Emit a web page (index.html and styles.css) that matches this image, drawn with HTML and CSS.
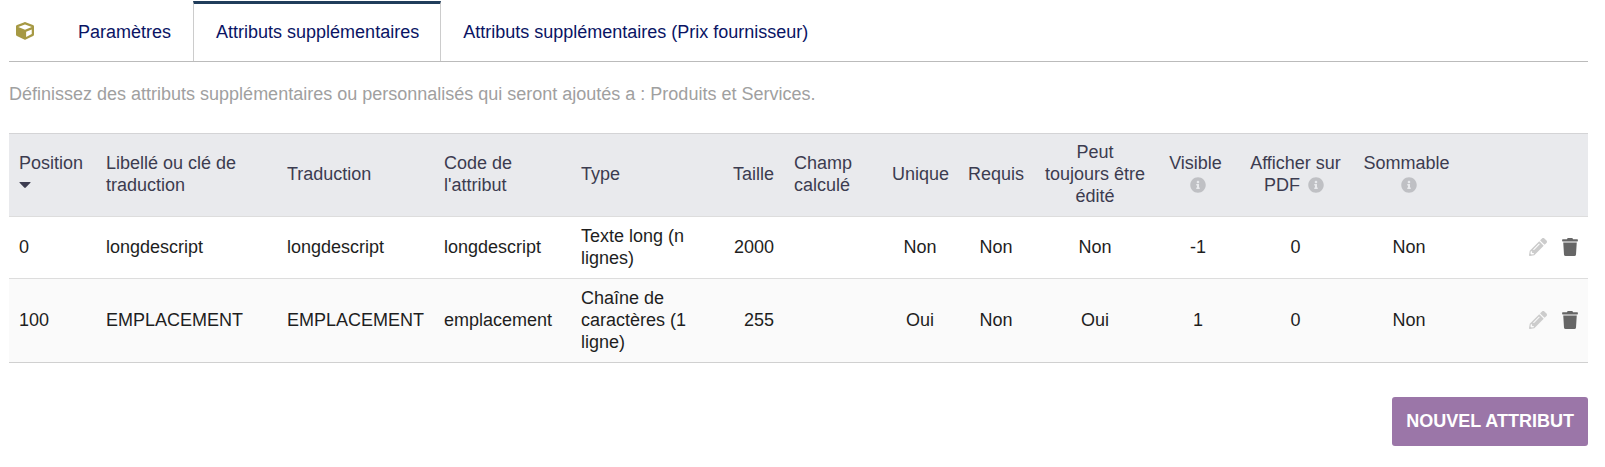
FILE: index.html
```html
<!DOCTYPE html>
<html lang="fr">

<head>
    <meta charset="UTF-8">
    <meta name="viewport" content="width=device-width, initial-scale=1.0">
    <title>Attributs supplémentaires - Produits et Services</title>
    <link rel="stylesheet" href="styles.css">
</head>

<body>
    <!-- icônes partagées -->
    <svg class="sprite" aria-hidden="true">
        <symbol id="icon-cube" viewBox="0 0 512 512">
            <path d="M239.1 6.3l-208 78c-18.7 7-31.1 25-31.1 45v225.1c0 18.2 10.3 34.8 26.5 42.9l208 104c13.5 6.8 29.4 6.8 42.9 0l208-104c16.3-8.1 26.5-24.8 26.5-42.9V129.3c0-20-12.4-37.9-31.1-44.9l-208-78C262 2.2 250 2.2 239.1 6.3zM256 68.4l192 72v1.1l-192 78-192-78v-1.1l192-72zm32 356V275.5l160-65v133.9l-160 80z"/>
        </symbol>
        <symbol id="icon-info" viewBox="0 0 512 512">
            <path d="M256 8C119.043 8 8 119.083 8 256c0 136.997 111.043 248 248 248s248-111.003 248-248C504 119.083 392.957 8 256 8zm0 110c23.196 0 42 18.804 42 42s-18.804 42-42 42-42-18.804-42-42 18.804-42 42-42zm56 254c0 6.627-5.373 12-12 12h-88c-6.627 0-12-5.373-12-12v-24c0-6.627 5.373-12 12-12h12v-64h-12c-6.627 0-12-5.373-12-12v-24c0-6.627 5.373-12 12-12h64c6.627 0 12 5.373 12 12v100h12c6.627 0 12 5.373 12 12v24z"/>
        </symbol>
        <symbol id="icon-pencil" viewBox="0 0 512 512">
            <path d="M497.9 142.1l-46.1 46.1c-4.7 4.7-12.3 4.7-17 0l-111-111c-4.7-4.7-4.7-12.3 0-17l46.1-46.1c18.7-18.7 49.1-18.7 67.9 0l60.1 60.1c18.8 18.7 18.8 49.1 0 67.9zM284.2 99.8L21.6 362.4.4 483.9c-2.9 16.4 11.4 30.6 27.8 27.8l121.5-21.3 262.6-262.6c4.7-4.7 4.7-12.3 0-17l-111-111c-4.8-4.7-12.4-4.7-17.1 0zM124.1 339.9c-5.5-5.5-5.5-14.3 0-19.8l154-154c5.5-5.5 14.3-5.5 19.8 0s5.5 14.3 0 19.8l-154 154c-5.5 5.5-14.3 5.5-19.8 0zM88 424h48v36.3l-64.5 11.3-31.1-31.1L51.7 376H88v48z"/>
        </symbol>
        <symbol id="icon-trash" viewBox="0 0 448 512">
            <path d="M432 32H312l-9.4-18.7A24 24 0 0 0 281.1 0H166.8a23.72 23.72 0 0 0-21.4 13.3L136 32H16A16 16 0 0 0 0 48v32a16 16 0 0 0 16 16h416a16 16 0 0 0 16-16V48a16 16 0 0 0-16-16zM53.2 467a48 48 0 0 0 47.9 45h245.8a48 48 0 0 0 47.9-45L416 128H32z"/>
        </symbol>
    </svg>

    <nav class="tabs">
        <svg class="tabs-icon" aria-hidden="true"><use href="#icon-cube"/></svg>
        <a class="tab" href="#parametres">Paramètres</a>
        <a class="tab tab-active" href="#attributs">Attributs supplémentaires</a>
        <a class="tab" href="#attributs-prix">Attributs supplémentaires (Prix fournisseur)</a>
    </nav>

    <p class="description">Définissez des attributs supplémentaires ou personnalisés qui seront ajoutés a : Produits et Services.</p>

    <table class="liste">
        <colgroup>
            <col class="col-position">
            <col class="col-label">
            <col class="col-translation">
            <col class="col-code">
            <col class="col-type">
            <col class="col-size">
            <col class="col-computed">
            <col class="col-unique">
            <col class="col-required">
            <col class="col-editable">
            <col class="col-visible">
            <col class="col-pdf">
            <col class="col-sum">
            <col class="col-actions">
        </colgroup>
        <thead>
            <tr>
                <th>Position <svg class="caret" viewBox="0 0 12 6" aria-hidden="true"><path d="M1 0h10q1 0 .4.8L6.8 5.600Q6 6.300 5.200 5.600L.6.800Q0 0 1 0z"/></svg></th>
                <th>Libellé ou clé de traduction</th>
                <th>Traduction</th>
                <th>Code de l'attribut</th>
                <th>Type</th>
                <th class="right">Taille</th>
                <th>Champ calculé</th>
                <th class="center">Unique</th>
                <th class="center">Requis</th>
                <th class="center">Peut toujours être édité</th>
                <th class="center">Visible&nbsp; <svg class="info" aria-hidden="true"><use href="#icon-info"/></svg></th>
                <th class="center">Afficher sur PDF <svg class="info info-inline" aria-hidden="true"><use href="#icon-info"/></svg></th>
                <th class="center">Sommable&nbsp; <svg class="info" aria-hidden="true"><use href="#icon-info"/></svg></th>
                <th></th>
            </tr>
        </thead>
        <tbody>
            <tr>
                <td>0</td>
                <td>longdescript</td>
                <td>longdescript</td>
                <td>longdescript</td>
                <td>Texte long (n lignes)</td>
                <td class="right">2000</td>
                <td></td>
                <td class="center">Non</td>
                <td class="center">Non</td>
                <td class="center">Non</td>
                <td class="center">-1</td>
                <td class="center">0</td>
                <td class="center">Non</td>
                <td>
                    <div class="actions">
                        <a href="#edit-longdescript" aria-label="Modifier"><svg class="edit" aria-hidden="true"><use href="#icon-pencil"/></svg></a>
                        <a href="#delete-longdescript" aria-label="Supprimer"><svg class="delete" aria-hidden="true"><use href="#icon-trash"/></svg></a>
                    </div>
                </td>
            </tr>
            <tr>
                <td>100</td>
                <td>EMPLACEMENT</td>
                <td>EMPLACEMENT</td>
                <td>emplacement</td>
                <td>Chaîne de caractères (1 ligne)</td>
                <td class="right">255</td>
                <td></td>
                <td class="center">Oui</td>
                <td class="center">Non</td>
                <td class="center">Oui</td>
                <td class="center">1</td>
                <td class="center">0</td>
                <td class="center">Non</td>
                <td>
                    <div class="actions">
                        <a href="#edit-emplacement" aria-label="Modifier"><svg class="edit" aria-hidden="true"><use href="#icon-pencil"/></svg></a>
                        <a href="#delete-emplacement" aria-label="Supprimer"><svg class="delete" aria-hidden="true"><use href="#icon-trash"/></svg></a>
                    </div>
                </td>
            </tr>
        </tbody>
    </table>

    <div class="tabs-action">
        <a class="but-action" href="#create">Nouvel attribut</a>
    </div>
</body>

</html>
```
FILE: styles.css
```css
body {
    margin: 0;
    padding: 1px 17px 20px 9px;
    background-color: #fff;
    color: #1e1e1e;
    font-family: Arial, "Liberation Sans", sans-serif;
    font-size: 18px;
    line-height: 22px;
}

.sprite {
    display: none;
}

svg {
    fill: currentColor;
}

/* onglets */
.tabs {
    display: flex;
    align-items: stretch;
    border-bottom: 1px solid #bbb;
}

.tabs-icon {
    align-self: center;
    width: 18px;
    height: 18px;
    margin: 0 22px 0 7px;
    color: #a69944;
}

.tab {
    padding: 17px 22px 18px;
    border-top: 3px solid transparent;
    color: #0a1464;
    text-decoration: none;
}

.tab-active {
    padding-right: 21px;
    border-top-color: #203d5b;
    border-left: 1px solid #ccc;
    border-right: 1px solid #ccc;
}

.description {
    margin: 21px 0 28px;
    color: #a0a0a0;
}

/* liste des attributs */
.liste {
    width: 100%;
    table-layout: fixed;
    border-collapse: separate;
    border-spacing: 0;
    border-top: 1px solid #d4d4d6;
    border-bottom: 1px solid #d0d0d0;
}

.liste th,
.liste td {
    padding: 8px 10px 9px;
    text-align: left;
    vertical-align: middle;
    font-weight: normal;
}

.liste th {
    padding: 7px 10px 9px;
    background-color: #e9eaed;
    color: #3c3c50;
}

.liste td {
    border-top: 1px solid #ddd;
}

.liste tbody tr:nth-child(even) {
    background-color: #fafafa;
}

.liste .right {
    text-align: right;
}

.liste .center {
    text-align: center;
}

.col-position { width: 87px; }
.col-label { width: 181px; }
.col-translation { width: 157px; }
.col-code { width: 137px; }
.col-type { width: 143px; }
.col-size { width: 70px; }
.col-computed { width: 98px; }
.col-unique { width: 76px; }
.col-required { width: 76px; }
.col-editable { width: 122px; }
.col-visible { width: 84px; }
.col-pdf { width: 111px; }
.col-sum { width: 116px; }

.caret {
    width: 12px;
    height: 6px;
    vertical-align: 3px;
}

.info {
    width: 16px;
    height: 16px;
    vertical-align: -2px;
    color: #bfc0c4;
}

.info-inline {
    margin: 0 3px;
}

.actions {
    display: flex;
    justify-content: flex-end;
    align-items: center;
    gap: 15px;
}

.actions svg {
    display: block;
    height: 18px;
}

.edit {
    width: 18px;
    color: #ccc;
}

.delete {
    width: 16px;
    color: #666;
}

/* boutons */
.tabs-action {
    display: flex;
    justify-content: flex-end;
    margin-top: 34px;
}

.but-action {
    padding: 13px 14px 14px;
    border-radius: 3px;
    background-color: #9b76a8;
    color: #fff;
    font-weight: bold;
    text-decoration: none;
    text-transform: uppercase;
}
```
